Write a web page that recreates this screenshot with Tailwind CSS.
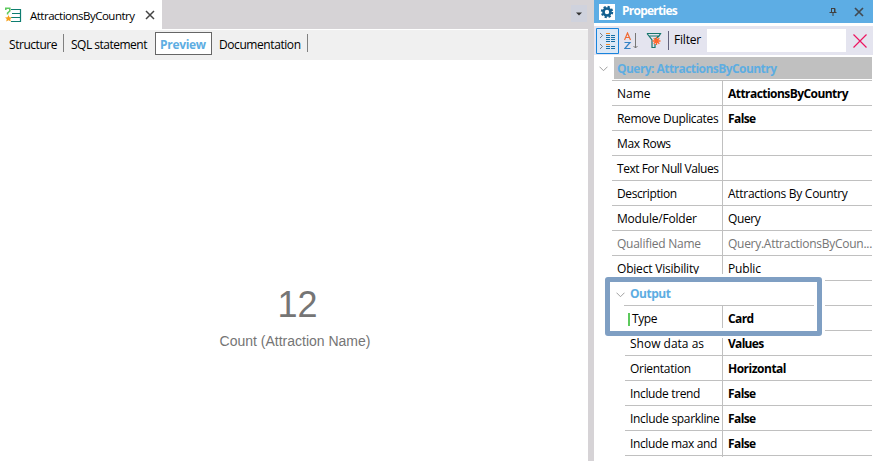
<!DOCTYPE html>
<html lang="en">
<head>
<meta charset="utf-8">
<title>AttractionsByCountry</title>
<script src="https://cdn.jsdelivr.net/npm/@tailwindcss/browser@4"></script>
</head>
<body class="w-[873px] h-[461px] overflow-hidden bg-white text-black font-['Open_Sans','Noto_Sans',sans-serif] text-[12px] leading-[16px] whitespace-nowrap">
<div class="flex w-full h-full">
  <main class="w-[588px] h-full flex flex-col shrink-0">
    <div class="h-[29px] flex bg-[#d6d3d6] shrink-0">
      <div class="w-[162px] h-full bg-white flex items-center pl-[5px]">
        <svg class="w-[17px] h-[17px] shrink-0 mt-[2px]" viewBox="0 0 17 17" fill="none">
          <path d="M6 2.500H15.500V14.500H6M7 6.500H15.500M6 10.500H15.500" stroke="#0e7d70" stroke-width="1.200"/>
          <path d="M.8 3V1.200H4.800V4L2.600 6V7.500" stroke="#5ec95e" stroke-width="1.600"/>
          <path d="M3.500 8L4.500 10.200L7 10.400L5.200 12L5.800 14.500L3.500 13.200L1.200 14.500L1.800 12L0 10.400L2.500 10.200Z" fill="#f5a01c"/>
        </svg>
        <span class="ml-[8px] mt-[2px] w-[105px] text-[11.5px] tracking-[-0.5px]">AttractionsByCountry</span>
        <svg class="ml-[10px] w-[10px] h-[10px]" viewBox="0 0 10 10"><path d="M1 1L9 9M9 1L1 9" stroke="#444" stroke-width="1.500"/></svg>
      </div>
      <div class="ml-auto w-[16px] h-[17px] mt-[5px] mr-px bg-[#cfd2dd] flex items-center justify-center">
        <svg class="w-[6px] h-[4px] mt-[1px]" viewBox="0 0 6 4"><path d="M0 .5H6L3 3.500Z" fill="#333"/></svg>
      </div>
    </div>
    <div class="h-[31px] bg-[#f0f0f0] border-t border-white flex shrink-0">
      <div class="w-[64px] pl-[9px] pt-[7px]"><span class="tracking-[-0.45px]">Structure</span></div>
      <div class="w-[91px] pl-[7px] relative pt-[7px] before:absolute before:left-[-1px] before:top-[4px] before:w-px before:h-[18px] before:bg-[#808080]"><span class="tracking-[-0.5px]">SQL statement</span></div>
      <div class="w-[57px] h-[23px] mt-[2px] border border-[#666] bg-white pl-[4px] pt-[4px] text-[#5dade2] font-bold"><span class="tracking-[-0.3px]">Preview</span></div>
      <div class="w-[96px] h-[18px] mt-[4px] border-r border-[#808080] pl-[7px] pt-[3px]"><span class="tracking-[-0.42px]">Documentation</span></div>
    </div>
    <div class="grow flex flex-col items-center pt-[225px] pl-[2px] text-[#757575] font-['Liberation_Sans',sans-serif]">
      <div class="text-[36px] leading-[40px] pl-[5px]">12</div>
      <div class="text-[14px] leading-[18px] mt-[7px]">Count (Attraction Name)</div>
    </div>
  </main>
  <div class="w-[6px] bg-[#d6d3d6] shrink-0"></div>
  <aside class="w-[279px] h-full flex flex-col shrink-0 relative">
    <header class="h-[23px] bg-[#5dade4] flex items-center pl-[5px] shrink-0 text-white font-bold">
      <svg class="w-[16px] h-[16px] shrink-0" viewBox="0 0 16 16"><path fill="#fff" d="M0 0H16V16H0Z"/><circle cx="8" cy="8" r="3.500" fill="none" stroke="#14608f" stroke-width="2.600"/><circle cx="8" cy="8" r="5.200" fill="none" stroke="#14608f" stroke-width="2" stroke-dasharray="2.200 1.884"/></svg>
      <span class="ml-[7px] -mt-px tracking-[-0.75px] w-[60px]">Properties</span>
      <svg class="ml-[147px] mt-[1px] w-[8px] h-[8px]" viewBox="0 0 8 8"><path d="M2 .5H6V4.500M2.500 .5V4.500M.5 4.500H7.500M4 4.500V8M5.500 .5V4.500" stroke="#414141" fill="none"/></svg>
      <svg class="ml-[17px] mt-[1px] w-[10px] h-[10px]" viewBox="0 0 10 10"><path d="M1 1L9 9M9 1L1 9" stroke="#414a52" stroke-width="1.700"/></svg>
    </header>
    <div class="h-[29px] mt-[3px] bg-[#e4e4ef] flex items-center shrink-0 pl-[2px]">
      <svg class="w-[23px] h-[26px] shrink-0" viewBox="0 0 23 26"><path d="M.5 .5H22.500V25.500H.5Z" fill="#dce8f6" stroke="#1884dd"/><path d="M4 5L6.500 7.500L4 10M4 16L6.500 18.500L4 21" fill="none" stroke="#7d8085"/><path d="M10 5.500H14" stroke="#f48a25"/><path d="M10 7.500H14M10 9.500H14M10 11.500H14M10 13.500H14M15 7.500H19M15 9.500H19M15 11.500H19M15 13.500H19M10 18.500H14M10 20.500H14M15 18.500H19M15 20.500H19" stroke="#176fa5"/><path d="M10 16.500H14" stroke="#f48a25"/></svg>
      <svg class="ml-[5px] w-[14px] h-[18px] shrink-0" viewBox="0 0 14 18" fill="none"><path d="M.5 8L3.500 1L6.500 8M1.500 5.500H5.500" stroke="#f06a35" stroke-width="1.200"/><path d="M.5 10.500H6L.8 16.500H6.500" stroke="#3482c4" stroke-width="1.200"/><path d="M11.500 1V16M9.500 14L11.500 16L13.500 14" stroke="#777"/></svg>
      <svg class="ml-[8px] w-[16px] h-[17px] shrink-0" viewBox="0 0 16 17" fill="none"><path d="M1 1.500H14.500L13 4L9 7.500M1 1.500L6 8V15.500H9V12M3 4H12.500" stroke="#17766c" stroke-width="1.200"/><path d="M10.500 5V13M6.500 9H14.500M7.700 6.200L13.300 11.800M13.300 6.200L7.700 11.800" stroke="#ff682c" stroke-width="1.300"/></svg>
      <div class="ml-[6px] w-px h-[19px] bg-[#62627c]"></div>
      <span class="ml-[5px] w-[33px] -mt-px tracking-[-0.2px]">Filter</span>
      <div class="w-[139px] h-[23px] bg-white"></div>
      <svg class="ml-[7px] w-[14px] h-[14px] shrink-0" viewBox="0 0 14 14"><path d="M.5 .5L13.500 13.500M13.500 .5L.5 13.500" stroke="#ec1561" stroke-width="1.200"/></svg>
    </div>
    <div class="h-[26px] border-b border-[#c0c0c0] ml-[18px] mr-px relative shrink-0">
      <svg class="absolute left-[-13px] top-[11px] w-[9px] h-[6px]" viewBox="0 0 9 6"><path d="M.5 .7L4.500 4.700L8.500 .7" stroke="#a0a0a0" fill="none"/></svg>
      <div class="ml-[2px] mt-[2px] h-[22px] bg-[#c0c0c0] text-[#5dade2] font-bold pl-[3px] pt-[4px]"><span class="tracking-[-0.55px]">Query: AttractionsByCountry</span></div>
    </div>
    <div class="ml-[18px] mr-px flex flex-col shrink-0 *:flex *:h-[25px] *:border-b *:border-[#c0c0c0] *:items-center">
      <div><div class="w-[111px] shrink-0 h-full border-r border-[#c0c0c0] pl-[5px] pt-[5px]"><span>Name</span></div><b class="pl-[5px] pt-px tracking-[-0.55px]">AttractionsByCountry</b></div>
      <div><div class="w-[111px] shrink-0 h-full border-r border-[#c0c0c0] pl-[5px] pt-[5px]"><span class="tracking-[-0.33px]">Remove Duplicates</span></div><b class="pl-[5px] pt-px tracking-[-0.6px]">False</b></div>
      <div><div class="w-[111px] shrink-0 h-full border-r border-[#c0c0c0] pl-[5px] pt-[5px]"><span class="tracking-[-0.35px]">Max Rows</span></div></div>
      <div><div class="w-[111px] shrink-0 h-full border-r border-[#c0c0c0] pl-[5px] pt-[5px]"><span class="tracking-[-0.46px]">Text For Null Values</span></div></div>
      <div><div class="w-[111px] shrink-0 h-full border-r border-[#c0c0c0] pl-[5px] pt-[5px]"><span class="tracking-[-0.4px]">Description</span></div><span class="pl-[5px] pt-px tracking-[-0.28px]">Attractions By Country</span></div>
      <div><div class="w-[111px] shrink-0 h-full border-r border-[#c0c0c0] pl-[5px] pt-[5px]"><span class="tracking-[-0.2px]">Module/Folder</span></div><span class="pl-[5px] pt-px tracking-[-0.4px]">Query</span></div>
      <div class="text-[#757575]"><div class="w-[111px] shrink-0 h-full border-r border-[#c0c0c0] pl-[5px] pt-[5px]"><span class="tracking-[-0.25px]">Qualified Name</span></div><span class="pl-[5px] pt-px tracking-[-0.28px]">Query.AttractionsByCoun...</span></div>
      <div><div class="w-[111px] shrink-0 h-full border-r border-[#c0c0c0] pl-[5px] pt-[5px]"><span class="tracking-[-0.2px]">Object Visibility</span></div><span class="pl-[5px] pt-px tracking-[-0.15px]">Public</span></div>
      <div></div>
      <div></div>
    </div>
    <div class="ml-[31px] mr-px flex flex-col shrink-0 *:flex *:h-[25px] *:border-b *:border-[#c0c0c0] *:items-center">
      <div><div class="w-[98px] shrink-0 h-full border-r border-[#c0c0c0] pl-[5px] pt-[5px]"><span>Show data as</span></div><b class="pl-[5px] pt-px tracking-[-0.7px]">Values</b></div>
      <div><div class="w-[98px] shrink-0 h-full border-r border-[#c0c0c0] pl-[5px] pt-[5px]"><span class="tracking-[-0.3px]">Orientation</span></div><b class="pl-[5px] pt-px tracking-[-0.5px]">Horizontal</b></div>
      <div><div class="w-[98px] shrink-0 h-full border-r border-[#c0c0c0] pl-[5px] pt-[5px]"><span class="tracking-[-0.35px]">Include trend</span></div><b class="pl-[5px] pt-px tracking-[-0.6px]">False</b></div>
      <div><div class="w-[98px] shrink-0 h-full border-r border-[#c0c0c0] pl-[5px] pt-[5px]"><span class="tracking-[-0.33px]">Include sparkline</span></div><b class="pl-[5px] pt-px tracking-[-0.6px]">False</b></div>
      <div><div class="w-[98px] shrink-0 h-full border-r border-[#c0c0c0] pl-[5px] pt-[5px]"><span class="tracking-[-0.38px]">Include max and</span></div><b class="pl-[5px] pt-px tracking-[-0.6px]">False</b></div>
    </div>
    <div class="ml-[128px] w-px h-px bg-[#c0c0c0]"></div>
    <section class="absolute left-[8px] top-[274px] w-[223px] h-[64px] bg-white pl-[3px] pt-[3px]">
      <div class="w-[217px] h-[59px] border-5 border-[#7f9fc3] rounded-[3px]">
        <div class="h-[24px] ml-[14px] mr-[3px] border-b border-[#c0c0c0] flex items-center relative text-[#5dade2] font-bold">
          <svg class="absolute left-[-8px] top-[10px] w-[9px] h-[6px]" viewBox="0 0 9 6"><path d="M.5 .7L4.500 4.700L8.500 .7" stroke="#a0a0a0" fill="none"/></svg>
          <span class="pl-[6px] pt-px tracking-[-0.5px]">Output</span>
        </div>
        <div class="h-[22px] ml-[18px] flex items-center">
          <div class="w-[2px] h-[13px] mt-[4px] bg-[#5cc95c]"></div>
          <div class="w-[93px] h-full pl-[2px] pt-[5px] border-r border-[#c0c0c0] tracking-[-0.4px]">Type</div>
          <b class="pl-[5px] pt-[3px] tracking-[-0.6px]">Card</b>
        </div>
      </div>
    </section>
  </aside>
</div>
</body>
</html>
